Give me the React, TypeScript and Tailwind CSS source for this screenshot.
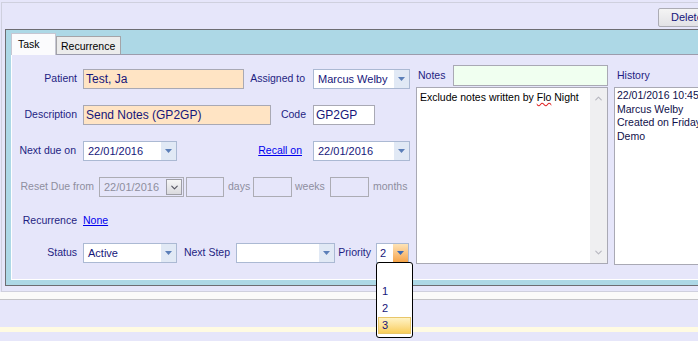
import { ChevronDown, ChevronUp } from "lucide-react";

const Tri = ({ className }: { className: string }) => (
  <svg width="7" height="4" viewBox="0 0 7 4" className={className}>
    <polygon points="0,0 7,0 3.5,4" />
  </svg>
);

const Combo = ({ width, value }: { width: string; value?: string }) => (
  <div className={`flex h-[20px] shrink-0 border border-[#abb9d3] bg-white ${width}`}>
    <div className="flex-1 truncate pl-[4px] text-[11px] leading-[18px] text-[#16167a]">{value}</div>
    <div className="flex w-[15px] items-center justify-center bg-[#e1e9f5]">
      <Tri className="fill-[#5b7fb8]" />
    </div>
  </div>
);

const App = () => {
  return (
    <div className="relative h-[341px] w-[698px] overflow-hidden bg-[#e6e6fa] font-['Liberation_Sans',Arial,sans-serif] text-[10.5px] text-[#1e1e82]">
      {/* outer frame */}
      <div className="ml-[1px] mt-[2px] h-[290px] w-[760px] border-b border-l border-t border-[#cfd0de]">
        <div className="flex h-[26px] w-[697px] justify-end pt-[5px]">
          <button className="-mr-[16px] h-[19px] w-[57px] shrink-0 rounded-[2px] border border-[#acacb4] bg-gradient-to-b from-[#f4f4f4] to-[#e2e2e6] pl-[12px] text-left text-[11px] text-[#16167a]">
            Delete
          </button>
        </div>

        {/* tab control frame */}
        <div className="ml-[3px] h-[257px] w-[760px] border-b border-l border-t border-[#6d6d72] bg-[#add8e6]">
          <div className="flex h-[24px] items-end pl-[5px]">
            <div className="relative z-10 -mb-[1px] h-[22px] w-[45px] border border-b-0 border-[#c6c6d2] bg-[#fbfbfd] pl-[6px] pt-[3px] text-[10.5px] text-black">
              Task
            </div>
            <div className="h-[18px] w-[65px] border border-b-0 border-[#a4a4a8] bg-[#ececec] pl-[4px] pt-[2px] text-[10.5px] text-black">
              Recurrence
            </div>
          </div>

          {/* tab page */}
          <div className="ml-[5px] flex h-[226px] border-b border-l border-t border-b-white border-l-white border-t-[#9c9cac] bg-[#e6e6fa]">
            {/* left form */}
            <div className="flex w-[400px] shrink-0 flex-col">
              <div className="mt-[14px] flex h-[20px] items-center">
                <div className="w-[71px] shrink-0 pr-[6px] text-right">Patient</div>
                <div className="h-[20px] w-[161px] shrink-0 border border-[#a9a9b4] bg-[#ffe4c4] pl-[2px] text-[12px] leading-[18px] text-[#16167a]">
                  Test, Ja
                </div>
                <div className="w-[69px] shrink-0 pr-[8px] text-right">Assigned to</div>
                <Combo width="w-[97px]" value="Marcus Welby" />
              </div>

              <div className="mt-[16px] flex h-[20px] items-center">
                <div className="w-[71px] shrink-0 pr-[6px] text-right">Description</div>
                <div className="h-[20px] w-[188px] shrink-0 border border-[#a9a9b4] bg-[#ffe4c4] pl-[2px] text-[12px] leading-[18px] text-[#16167a]">
                  Send Notes (GP2GP)
                </div>
                <div className="w-[42px] shrink-0 pr-[7px] text-right">Code</div>
                <div className="h-[20px] w-[62px] shrink-0 border border-[#a9a9b4] bg-white pl-[2px] text-[12px] leading-[18px] text-[#16167a]">
                  GP2GP
                </div>
              </div>

              <div className="mt-[16px] flex h-[20px] items-center">
                <div className="w-[71px] shrink-0 pr-[7px] text-right">Next due on</div>
                <Combo width="w-[94px]" value="22/01/2016" />
                <div className="w-[136px] shrink-0 pr-[11px] text-right">
                  <span className="text-[#0000ee] underline">Recall on</span>
                </div>
                <Combo width="w-[97px]" value="22/01/2016" />
              </div>

              <div className="mt-[16px] flex h-[20px] items-center text-[#8e8e9e]">
                <div className="w-[87px] shrink-0 pr-[5px] text-right">Reset Due from</div>
                <div className="flex h-[20px] w-[85px] shrink-0 items-center border border-[#acacb4] pl-[4px] text-[11px]">
                  <span className="flex-1">22/01/2016</span>
                  <div className="mr-[1px] flex h-[16px] w-[16px] items-center justify-center border border-[#9e9ea6] bg-gradient-to-b from-[#f6f6f6] to-[#dadade]">
                    <ChevronDown size={11} strokeWidth={2.5} className="text-[#555560]" />
                  </div>
                </div>
                <div className="ml-[2px] h-[20px] w-[38px] shrink-0 border border-[#acacb4]" />
                <div className="w-[29px] shrink-0 pl-[4px]">days</div>
                <div className="h-[20px] w-[39px] shrink-0 border border-[#acacb4]" />
                <div className="w-[38px] shrink-0 pl-[3px]">weeks</div>
                <div className="h-[20px] w-[39px] shrink-0 border border-[#acacb4]" />
                <div className="shrink-0 pl-[4px]">months</div>
              </div>

              <div className="mt-[14px] flex h-[20px] items-center">
                <div className="w-[71px] shrink-0 pr-[6px] text-right">Recurrence</div>
                <span className="text-[#0000ee] underline">None</span>
              </div>

              <div className="mt-[12px] flex h-[20px] items-center">
                <div className="w-[71px] shrink-0 pr-[6px] text-right">Status</div>
                <Combo width="w-[94px]" value="Active" />
                <div className="w-[59px] shrink-0 pr-[6px] text-right">Next Step</div>
                <Combo width="w-[99px]" />
                <div className="w-[41px] shrink-0 pr-[5px] text-right">Priority</div>
                <div className="relative flex h-[20px] w-[33px] shrink-0 border border-[#abb9d3] bg-white">
                  <div className="flex-1 pl-[3px] text-[11px] leading-[18px] text-[#16167a]">2</div>
                  <div className="flex w-[15px] items-center justify-center bg-gradient-to-b from-[#fde3b6] to-[#f5a447]">
                    <Tri className="fill-[#3e6ab4]" />
                  </div>
                  {/* open list */}
                  <div className="absolute left-[-1px] top-[18px] z-20 h-[76px] w-[37px] rounded-[3px] border border-black bg-white pt-[20px] text-[11px] text-[#16167a]">
                    <div className="h-[17px] pl-[5px] leading-[17px]">1</div>
                    <div className="h-[17px] pl-[5px] leading-[17px]">2</div>
                    <div className="mx-[1px] h-[17px] border border-[#e8c66a] bg-gradient-to-b from-[#fff3c4] to-[#f8cd58] pl-[3px] leading-[15px]">
                      3
                    </div>
                  </div>
                </div>
              </div>
            </div>

            {/* notes */}
            <div className="flex w-[198px] shrink-0 flex-col pt-[10px]">
              <div className="flex h-[21px] items-center">
                <div className="w-[41px] shrink-0 pl-[6px]">Notes</div>
                <div className="h-[21px] w-[155px] shrink-0 border border-[#a9a9b4] bg-[#f0fff0]" />
              </div>
              <div className="ml-[4px] mt-[1px] flex h-[177px] w-[192px] border border-[#a9a9b4] bg-white">
                <div className="flex-1 pl-[3px] pt-[3px] text-[10.5px] leading-[13px] text-black">
                  Exclude notes written by{" "}
                  <span className="underline decoration-[#e02020] decoration-wavy">Flo</span> Night
                </div>
                <div className="flex w-[17px] flex-col items-center justify-between bg-[#efeff1] py-[5px]">
                  <ChevronUp size={11} strokeWidth={2.5} className="text-[#b8b8c0]" />
                  <ChevronDown size={11} strokeWidth={2.5} className="text-[#b8b8c0]" />
                </div>
              </div>
            </div>

            {/* history */}
            <div className="flex flex-1 flex-col pt-[10px]">
              <div className="flex h-[21px] items-center pl-[7px]">History</div>
              <div className="ml-[4px] mt-[1px] h-[178px] border border-[#a9a9b4] bg-white pl-[2px] pt-[1px] text-[10.5px] leading-[13.5px] text-[#10104a]">
                <div>22/01/2016 10:45</div>
                <div>Marcus Welby</div>
                <div>Created on Friday</div>
                <div>Demo</div>
              </div>
            </div>
          </div>
        </div>
      </div>

      {/* bottom strips */}
      <div className="h-[8px] border-b border-[#c4c4c8] bg-[#fafafa]" />
      <div className="h-[27px]" />
      <div className="h-[5px] bg-[#fffbe2]" />
    </div>
  );
};

export default App;
